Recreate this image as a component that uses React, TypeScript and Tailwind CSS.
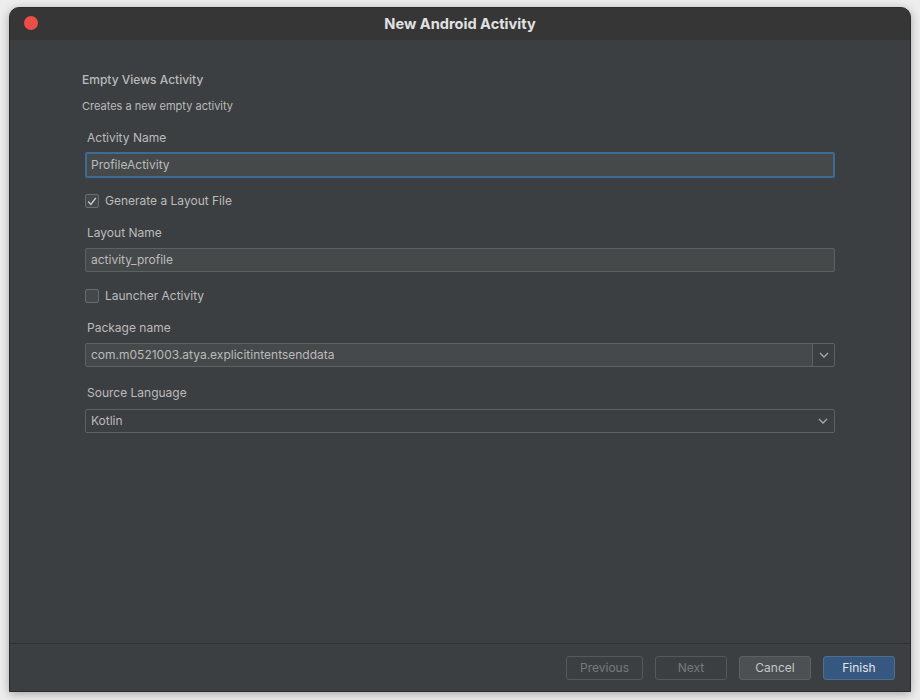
import React from "react";

function Chevron() {
  return (
    <svg width="10" height="6" viewBox="0 0 10 6" fill="none">
      <path d="M1 1l4 4 4-4" stroke="#a9abad" strokeWidth="1.3" />
    </svg>
  );
}

function Checkbox({ checked }: { checked: boolean }) {
  return (
    <div className="w-[14px] h-[14px] rounded-[2px] border border-[#6b6e70] bg-[#43494a] flex items-center justify-center">
      {checked && (
        <svg width="10" height="9" viewBox="0 0 10 9" fill="none">
          <path d="M1.2 4.6l2.6 2.8L8.8 1" stroke="#c6c8ca" strokeWidth="1.4" />
        </svg>
      )}
    </div>
  );
}

export default function App() {
  return (
    <div
      className="w-[920px] h-[700px] bg-[#ededed] pt-[7px] pl-[9px]"
      style={{ fontFamily: "Inter, 'Noto Sans', sans-serif" }}
    >
      <div className="w-[902px] h-[685px] flex flex-col rounded-t-[10px] border border-[#2b2b2b] bg-[#3c3f41] shadow-[0_2px_10px_rgba(0,0,0,0.3)] overflow-hidden">
        {/* Title bar */}
        <div className="h-[32px] bg-[#363636] flex items-center relative shrink-0">
          <div className="absolute left-[14px] top-[8px] w-[14px] h-[14px] rounded-full bg-[#eb4e47]" />
          <div className="flex-1 text-center text-[14.6px] leading-[18px] -mt-[1px] font-bold text-[#e2e2e2]">New Android Activity</div>
        </div>

        {/* Content */}
        <div className="flex-1 flex flex-col pl-[72px] pr-[75px] pt-[32px] text-[#bbbbbb] text-[12px]">
          <div className="leading-[16px] font-medium">Empty Views Activity</div>
          <div className="mt-[10px] text-[11px] leading-[16px]">Creates a new empty activity</div>

          <div className="mt-[16px] ml-[5px] leading-[16px]">Activity Name</div>
          <div className="mt-[6px] ml-[3px] h-[26px] border-2 border-[#3d6a96] bg-[#45494a] rounded-[2px] flex items-center px-[4px]">
            ProfileActivity
          </div>

          <div className="mt-[15px] ml-[3px] flex items-center gap-[6px] h-[16px]">
            <Checkbox checked />
            <span>Generate a Layout File</span>
          </div>

          <div className="mt-[16px] ml-[5px] leading-[16px]">Layout Name</div>
          <div className="mt-[7px] ml-[3px] h-[24px] border border-[#5e6162] bg-[#45494a] rounded-[2px] flex items-center px-[5px]">
            activity_profile
          </div>

          <div className="mt-[16px] ml-[3px] flex items-center gap-[6px] h-[16px]">
            <Checkbox checked={false} />
            <span>Launcher Activity</span>
          </div>

          <div className="mt-[16px] ml-[5px] leading-[16px]">Package name</div>
          <div className="mt-[7px] ml-[3px] h-[24px] border border-[#5e6162] rounded-[2px] flex">
            <div className="flex-1 bg-[#45494a] flex items-center px-[5px]">com.m0521003.atya.explicitintentsenddata</div>
            <div className="w-[22px] border-l border-[#5e6162] flex items-center justify-center">
              <Chevron />
            </div>
          </div>

          <div className="mt-[18px] ml-[5px] leading-[16px]">Source Language</div>
          <div className="mt-[8px] ml-[3px] h-[24px] border border-[#5e6162] rounded-[2px] flex items-center justify-between pl-[5px] pr-[6px]">
            <span>Kotlin</span>
            <Chevron />
          </div>
        </div>

        {/* Footer */}
        <div className="h-[48px] border-t border-[#2f3133] flex items-start justify-end gap-[12px] pt-[12px] pr-[15px] text-[12px] shrink-0">
          <div className="w-[77px] h-[24px] rounded-[3px] border border-[#55595b] flex items-center justify-center text-[#777a7c]">Previous</div>
          <div className="w-[72px] h-[24px] rounded-[3px] border border-[#55595b] flex items-center justify-center text-[#777a7c]">Next</div>
          <div className="w-[72px] h-[24px] rounded-[3px] border border-[#5e6162] bg-[#4c5052] flex items-center justify-center text-[#c4c6c8]">Cancel</div>
          <div className="w-[72px] h-[24px] rounded-[3px] border border-[#4c708c] bg-[#365880] flex items-center justify-center text-[#e4e6e8]">Finish</div>
        </div>
      </div>
    </div>
  );
}
